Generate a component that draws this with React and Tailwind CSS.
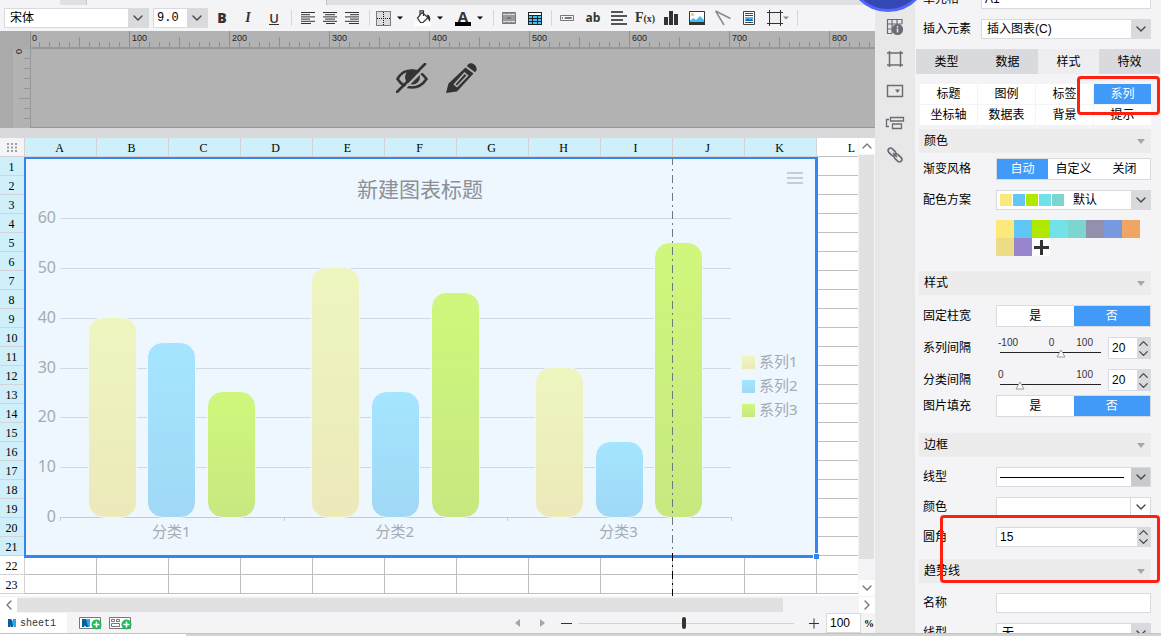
import { ChevronDown, ChevronLeft, ChevronRight, ChevronUp } from "lucide-react";

const COLUMNS = ["A", "B", "C", "D", "E", "F", "G", "H", "I", "J", "K", "L"];
const ROWS = Array.from({ length: 23 }, (_, i) => i + 1);
const SELECTED_ROWS = 21;
const SELECTED_COLUMNS = 11;

const CATEGORIES = [
  { name: "分类1", values: [40, 35, 25] },
  { name: "分类2", values: [50, 25, 45] },
  { name: "分类3", values: [30, 15, 55] },
];
const SERIES = [
  { name: "系列1", fill: "url(#series-yellow)" },
  { name: "系列2", fill: "url(#series-blue)" },
  { name: "系列3", fill: "url(#series-green)" },
];

const PALETTE = [
  "bg-[#fbe97b]",
  "bg-[#60c6f6]",
  "bg-[#b0e800]",
  "bg-[#71e2e8]",
  "bg-[#7cd5cf]",
  "bg-[#9191ad]",
  "bg-[#7898e0]",
  "bg-[#f1a565]",
  "bg-[#ecdc86]",
  "bg-[#9885cc]",
];

/* ---------- toolbar ---------- */

function Divider({ className }) {
  return <span className={`h-4 w-px shrink-0 bg-[#d6d6da] ${className}`} />;
}

function ToolButton({ label, className = "w-[26px]", children }) {
  return (
    <button aria-label={label} className={`flex h-5 shrink-0 items-center justify-center text-[#333] ${className}`}>
      {children}
    </button>
  );
}

function Caret({ className = "text-black" }) {
  return (
    <svg className={`w-1.5 h-1 shrink-0 ${className}`} viewBox="0 0 6 4">
      <path d="M0 .5h6L3 3.5z" fill="currentColor" />
    </svg>
  );
}

function AlignIcon({ lines }) {
  return (
    <svg width="14" height="12" viewBox="0 0 14 12" stroke="#333" strokeWidth="1">
      {lines.map(([x1, x2], i) => (
        <path key={i} d={`M${x1} ${i * 2.2 + 0.5}H${x2}`} />
      ))}
    </svg>
  );
}

function Toolbar() {
  return (
    <div className="flex h-[26px] items-center bg-[#f4f4f7] pl-1">
      <div className="flex h-5 w-[145px] shrink-0 border border-[#d9dade] bg-white">
        <select aria-label="字体" className="min-w-0 flex-1 appearance-none pl-[5px] text-xs leading-[18px]">
          <option>宋体</option>
        </select>
        <span className="flex w-5 items-center justify-center bg-[#d9dade]">
          <ChevronDown size={16} strokeWidth={2} color="#444" />
        </span>
      </div>
      <div className="ml-1 flex h-5 w-[55px] shrink-0 border border-[#d9dade] bg-white">
        <select
          aria-label="字号"
          className="min-w-0 flex-1 appearance-none pl-[3px] font-['Liberation_Mono',monospace] text-xs leading-[18px]"
        >
          <option>9.0</option>
        </select>
        <span className="flex w-5 items-center justify-center bg-[#d9dade]">
          <ChevronDown size={16} strokeWidth={2} color="#444" />
        </span>
      </div>

      <ToolButton label="加粗" className="ml-px w-[26px]">
        <span className="font-['Open_Sans',sans-serif] text-sm font-extrabold">B</span>
      </ToolButton>
      <ToolButton label="斜体">
        <span className="font-['Liberation_Serif',serif] text-sm font-bold italic">I</span>
      </ToolButton>
      <ToolButton label="下划线">
        <span className="border-b border-[#333] font-['Open_Sans',sans-serif] text-[13px] leading-3 font-semibold">U</span>
      </ToolButton>
      <Divider className="mr-[5px] ml-1" />
      <ToolButton label="左对齐" className="w-[22px]">
        <AlignIcon lines={[[0, 14], [0, 9], [0, 14], [0, 9], [0, 14], [0, 10]]} />
      </ToolButton>
      <ToolButton label="居中" className="w-[22px]">
        <AlignIcon lines={[[0, 14], [2, 12], [0, 14], [2, 12], [0, 14], [3, 12]]} />
      </ToolButton>
      <ToolButton label="右对齐" className="w-[22px]">
        <AlignIcon lines={[[0, 14], [5, 14], [0, 14], [5, 14], [0, 14], [4, 14]]} />
      </ToolButton>
      <Divider className="mr-[5px] ml-1.5" />

      <div className="flex gap-3">
        <ToolButton label="边框" className="gap-1.5">
          <svg width="16" height="16" viewBox="0 0 16 16">
            <path d="M1.5 1.5h14v14h-14z" fill="#dcdce0" />
            <path d="M1.5 1.5h14v14h-14zM8.5 2v13M2 8.5h13" fill="none" stroke="#111" strokeDasharray="1 1" />
          </svg>
          <Caret />
        </ToolButton>
        <ToolButton label="填充颜色" className="gap-1.5">
          <svg width="16" height="16" viewBox="0 0 16 16">
            <path d="M0 12h16v4H0z" fill="#fff" />
            <path d="M7 2.5 13 7.5 8 12.5H5.5L2.5 8z" fill="#fff" stroke="#333" strokeWidth="1.2" />
            <path d="M5 5V.8h3.5V6" fill="none" stroke="#333" strokeWidth="1.2" />
            <path d="M12 4.5c3 .5 3.700 3 3 7-1 0-1.500-2-2.500-3.500z" fill="#333" />
          </svg>
          <Caret />
        </ToolButton>
        <ToolButton label="文字颜色" className="gap-1.5">
          <span className="flex w-4 flex-col items-center border-b-4 border-black font-['Open_Sans',sans-serif] text-[15px] leading-3 font-bold">
            A
          </span>
          <Caret />
        </ToolButton>
      </div>
      <Divider className="mr-0.5 ml-2.5" />

      <ToolButton label="合并单元格">
        <svg width="14" height="12" viewBox="0 0 14 12">
          <path d="M.5.5h13v11H.5z" fill="#9a9a9a" stroke="#777" />
          <path d="M1 2.500h12M1 9.500h12" stroke="#d8d8d8" />
          <path d="M4.500 0v2M9.500 0v2M4.500 10v2M9.500 10v2" stroke="#777" />
          <path d="M5 6h4" stroke="#777" strokeWidth="2" />
        </svg>
      </ToolButton>
      <ToolButton label="插入表格">
        <svg width="14" height="13" viewBox="0 0 14 13">
          <path d="M0 0h14v13H0z" fill="#222" />
          <path d="M1 1h12v2H1z" fill="#fff" />
          <path
            d="M1 4h3v2H1zM5 4h4v2H5zM10 4h3v2h-3zM1 7h3v2H1zM5 7h4v2H5zM10 7h3v2h-3zM1 10h3v2H1zM5 10h4v2H5zM10 10h3v2h-3z"
            fill="#43c3f7"
          />
        </svg>
      </ToolButton>
      <Divider className="mr-0.5 ml-[3px]" />
      <ToolButton label="文本控件">
        <svg width="14" height="6" viewBox="0 0 14 6" fill="none" stroke="#777">
          <path d="M.5.5h13v5H.5zM2.500 2v2M5 2.500h6.500v1H5z" />
        </svg>
      </ToolButton>
      <ToolButton label="普通文本">
        <span className="font-['Open_Sans',sans-serif] text-xs font-bold">ab</span>
      </ToolButton>
      <ToolButton label="富文本">
        <svg width="16" height="14" viewBox="0 0 16 14" stroke="#555" strokeWidth="2">
          <path d="M0 1h12M0 5h16M0 9h12M0 13h16" />
        </svg>
      </ToolButton>
      <ToolButton label="公式">
        <span className="font-['Liberation_Serif',serif] text-sm font-bold">F</span>
        <span className="font-['Liberation_Serif',serif] text-[10px] font-bold">(x)</span>
      </ToolButton>
      <ToolButton label="图表">
        <svg width="14" height="14" viewBox="0 0 14 14" fill="#333">
          <path d="M0 6h4v8H0zM5 0h4v14H5zM10 3h4v11h-4z" />
        </svg>
      </ToolButton>
      <ToolButton label="图片">
        <svg width="16" height="14" viewBox="0 0 16 14">
          <path d="M.5.5h15v13H.5z" fill="#fff" stroke="#333" />
          <circle cx="3.500" cy="3.500" r="1.600" fill="#f8c050" />
          <path d="M1 11V9.500L4.500 7 7 9l4-4 4 4v2z" fill="#43bdf5" />
          <path d="M0 11h16v3H0z" fill="#333" />
        </svg>
      </ToolButton>
      <ToolButton label="斜线">
        <svg width="16" height="16" viewBox="0 0 16 16" fill="none" stroke="#8a8a8a" strokeWidth="1.5">
          <path d="M.5 1 15.500 8.500M.5 1 9 15" />
        </svg>
      </ToolButton>
      <ToolButton label="子报表">
        <svg width="12" height="14" viewBox="0 0 12 14">
          <path d="M.5.5h11v13H.5z" fill="#fff" stroke="#444" />
          <path d="M2 2.500h8M2 4.500h8M2 11.500h8" stroke="#444" />
          <path d="M2 6h8v4H2z" fill="#43bdf5" />
          <path d="M2 10 5 7.500 7 9l1.500-1.200L10 10z" fill="#1663b0" />
        </svg>
      </ToolButton>
      <ToolButton label="悬浮元素" className="w-7 pl-1">
        <svg width="16" height="16" viewBox="0 0 16 16" stroke="#333" className="shrink-0">
          <path d="M2.500 2.500h11v11h-11z" fill="#efefef" />
          <path d="M0 2.500h16M0 13.500h16M2.500 0v16M13.500 0v16" fill="none" />
        </svg>
        <Caret className="text-[#888]" />
      </ToolButton>
      <Divider className="ml-[7px]" />
    </div>
  );
}

/* ---------- ruler and parameter pane ---------- */

function ParameterPane() {
  const ticks = Array.from({ length: 85 }, (_, i) => i);
  return (
    <div className="grid h-[97px] grid-cols-[30px_minmax(0,1fr)] grid-rows-[18px_minmax(0,1fr)] bg-[#b2b2b2]">
      <div className="bg-[#aaa]" />
      <svg className="h-full w-full" fontFamily="'Liberation Sans',sans-serif" fontSize="9">
        {ticks.map((i) => (
          <path
            key={i}
            d={`M${i * 10 - 0.5 + (i === 0 ? 1 : 0)} ${i % 10 === 0 ? 0 : i % 5 === 0 ? 6 : 11}V17`}
            stroke="#8f8f8f"
          />
        ))}
        {ticks
          .filter((i) => i % 10 === 0)
          .map((i) => (
            <text key={i} x={i * 10 + 2} y="10" fill="#222">
              {i * 10}
            </text>
          ))}
        <path d="M0 17h2000" stroke="#979797" strokeWidth="2" />
      </svg>
      <div className="flex justify-end bg-[#aaa]">
        <svg className="h-full w-[17px] bg-[#b2b2b2]" fontFamily="'Liberation Sans',sans-serif" fontSize="9">
          <text x="-5" y="9" transform="rotate(-90)" fill="#222">
            0
          </text>
          {[1, 2, 3, 4, 5, 6, 7].map((i) => (
            <path key={i} d={`M${i === 5 ? 6 : 11} ${i * 10 - 0.5}H17`} stroke="#979797" />
          ))}
        </svg>
      </div>
      <div className="flex justify-center gap-[18px] border-b border-l border-[#979797] pt-3.5 pr-8">
        <button aria-label="隐藏" className="h-[30px] w-8">
          <svg width="32" height="30" viewBox="0 0 32 30">
            <path d="M1.500 16C6 8.500 10.500 7.500 16 7.500s10.500 2.500 14.500 8.500c-4 6-9 8.500-14.500 8.500S5.500 22 1.500 16z" fill="none" stroke="#333" strokeWidth="2.600" />
            <circle cx="16.500" cy="14" r="7.500" fill="#333" />
            <path d="M8 11c-1 3.500-.5 7 1.500 9.500" fill="none" stroke="#b2b2b2" strokeWidth="1.500" />
            <path d="M18 10.500c2 .5 3 2 3 4" fill="none" stroke="#b2b2b2" strokeWidth="1.500" />
            <path d="M4 30 32 2" stroke="#b2b2b2" strokeWidth="2.500" />
            <path d="M1 29 29 1" stroke="#333" strokeWidth="2.600" strokeLinecap="round" />
          </svg>
        </button>
        <button aria-label="编辑" className="h-[30px] w-8">
          <svg width="32" height="30" viewBox="0 0 32 30">
            <path d="M21.500 2c3-4 10-.5 9 5.500L29 9.200 21 3.200z" fill="#333" />
            <path d="M19.500 4.500 27.500 10.500 11 28.500 0 30 2.500 20.500z" fill="#333" />
            <path d="M18.500 10 21.500 12.500 11 23.500l-2.500-2z" fill="none" stroke="#b2b2b2" strokeWidth="1.600" />
          </svg>
        </button>
      </div>
    </div>
  );
}

/* ---------- chart ---------- */

function Chart() {
  return (
    <svg
      width="789"
      height="396"
      viewBox="0 0 789 396"
      className="block"
      fontFamily="'Noto Sans','Noto Sans CJK SC',sans-serif"
      fontSize="15"
      fill="#a3abb3"
    >
      <defs>
        <linearGradient id="series-yellow" x1="0" y1="0" x2="0" y2="1">
          <stop offset="0" stopColor="#eef6c0" />
          <stop offset="1" stopColor="#ece9ba" />
        </linearGradient>
        <linearGradient id="series-blue" x1="0" y1="0" x2="0" y2="1">
          <stop offset="0" stopColor="#a4e5ff" />
          <stop offset="1" stopColor="#a0d8f6" />
        </linearGradient>
        <linearGradient id="series-green" x1="0" y1="0" x2="0" y2="1">
          <stop offset="0" stopColor="#d0f77c" />
          <stop offset="1" stopColor="#c7e880" />
        </linearGradient>
      </defs>

      <text x="394" y="38" fontSize="21" textAnchor="middle" fill="#8b9097">
        新建图表标题
      </text>
      <path d="M761 14h16M761 19h16M761 24h16" stroke="#c5ccd3" strokeWidth="2" />

      {[0, 10, 20, 30, 40, 50, 60].map((v) => {
        const y = Math.round(358 - v * 4.983) + 0.5;
        return (
          <g key={v}>
            <path d={`M34 ${y}H705`} stroke={v === 0 ? "#c3ccd6" : "#d0d8e0"} />
            <text x="30" y={y + 4.500} fontSize="16" textAnchor="end">
              {v}
            </text>
          </g>
        );
      })}
      <path d="M34.500 358v4M258.500 358v4M481.500 358v4M705.500 358v4" stroke="#c3ccd6" />

      {CATEGORIES.map((category, c) => {
        const left = 62.8 + c * 223.6;
        return (
          <g key={category.name}>
            {category.values.map((v, i) => {
              const h = Math.round(v * 4.983);
              return (
                <rect
                  key={i}
                  x={Math.round(left + i * 59.6) - 0.5}
                  y={357.5 - h}
                  width="48"
                  height={h + 1}
                  rx="15"
                  fill={SERIES[i].fill}
                  stroke="#eef6fe"
                />
              );
            })}
            <text x={left + 82.500} y="378" textAnchor="middle">
              {category.name}
            </text>
          </g>
        );
      })}

      {SERIES.map((s, i) => (
        <g key={s.name}>
          <rect x="716" y={197 + i * 24} width="13" height="13" fill={s.fill} />
          <text x="733" y={208 + i * 24}>
            {s.name}
          </text>
        </g>
      ))}
    </svg>
  );
}

/* ---------- sheet ---------- */

function Sheet() {
  return (
    <div className="relative min-w-0 flex-1 overflow-hidden bg-white">
      <table className="w-[889px] table-fixed border-separate border-spacing-0 text-center font-['Liberation_Serif',serif] text-xs">
        <thead>
          <tr className="h-[19px]">
            <th className="w-[25px] border-r border-b border-[#d3d3d8] bg-[#f4f4f7] p-0" aria-label="全选">
              <svg className="mx-auto" width="11" height="9" viewBox="0 0 11 9" fill="#a0a0a0">
                <path d="M0 0h2v2H0zM4 0h2v2H4zM8 0h2v2H8zM0 3.500h2v2H0zM4 3.500h2v2H4zM8 3.500h2v2H8zM0 7h2v2H0zM4 7h2v2H4zM8 7h2v2H8z" />
              </svg>
            </th>
            {COLUMNS.map((c, i) => (
              <th
                key={c}
                className={`w-[72px] border-r border-b p-0 pt-[3px] pr-0.5 leading-[15px] font-normal ${
                  i < SELECTED_COLUMNS ? "border-[#d3d3d8] bg-[#cff0fb]" : "border-[#bfbfbf] bg-white"
                }`}
              >
                {c}
              </th>
            ))}
          </tr>
        </thead>
        <tbody>
          {ROWS.map((r) => (
            <tr key={r} className="h-[19px]">
              <th
                className={`border-r border-b border-[#d3d3d8] p-0 pt-0.5 pr-px leading-4 font-normal ${
                  r <= SELECTED_ROWS ? "bg-[#cff0fb]" : "bg-white"
                }`}
              >
                {r}
              </th>
              {COLUMNS.map((c) => (
                <td key={c} className="border-r border-b border-[#bfbfbf] p-0" />
              ))}
            </tr>
          ))}
        </tbody>
      </table>

      <div className="absolute top-[19px] left-6 border-t-2 border-r-[3px] border-b-[3px] border-l-2 border-[#3585ef] bg-[#eef6fe]">
        <Chart />
        <span className="absolute -right-1 -bottom-1 size-[6px] border-t border-l border-white bg-[#3585ef]" />
      </div>
      <svg className="absolute top-[19px] left-[672px] h-full w-px" strokeDasharray="8 4 2 4">
        <path d="M.5 0V396" stroke="#6d7883" />
        <path d="M.5 396V1200" stroke="#000" />
      </svg>
    </div>
  );
}

function SheetArea() {
  return (
    <div className="flex min-h-0 flex-1 flex-col">
      <div className="flex min-h-0 flex-1">
        <Sheet />
        <div className="flex w-[17px] flex-col bg-[#f4f4f7] pl-px">
          <button aria-label="向上" className="flex h-4 items-center justify-center bg-white">
            <ChevronUp size={16} strokeWidth={2} color="#777" />
          </button>
          <div className="mt-px flex-1">
            <div className="h-[95%] w-[15px] bg-[#e1e1e1]" />
          </div>
          <button aria-label="向下" className="flex h-4 items-center justify-center bg-white">
            <ChevronDown size={16} strokeWidth={2} color="#777" />
          </button>
        </div>
      </div>
      <div className="mt-px flex h-4 bg-[#f4f4f7]">
        <button aria-label="向左" className="flex w-[17px] items-center justify-center bg-white">
          <ChevronLeft size={16} strokeWidth={2} color="#777" />
        </button>
        <div className="flex-1 py-px">
          <div className="h-full w-[91%] bg-[#e1e1e1]" />
        </div>
        <button aria-label="向右" className="flex w-4 items-center justify-center bg-white">
          <ChevronRight size={16} strokeWidth={2} color="#777" />
        </button>
      </div>
    </div>
  );
}

function SheetBadge({ children, label }) {
  return (
    <button aria-label={label}>
      <svg width="24" height="14" viewBox="0 0 24 14">
        <path d="M.5 1.500h21v11H.5z" fill="#fff" stroke="#777" />
        {children}
        <circle cx="17.500" cy="8.500" r="5" fill="#1bbf54" />
        <path d="M14.500 8.500h6M17.500 5.500v6" stroke="#fff" strokeWidth="1.500" />
      </svg>
    </button>
  );
}

function StatusBar() {
  return (
    <div className="flex h-5 items-center bg-[#f4f4f7]">
      <button className="flex h-full w-[67px] items-center gap-1 bg-white pl-2 font-['Liberation_Mono',monospace] text-[10px] text-[#333]">
        <svg width="8" height="8" viewBox="0 0 8 8">
          <path d="M0 0h3l2 3v5H3L2.500 5v3H0z" fill="#0b5aa5" />
          <path d="M5 0h3v8H6L4 4z" fill="#2ea7e0" />
        </svg>
        sheet1
      </button>
      <div className="ml-3 flex gap-1.5">
        <SheetBadge label="新建工作表">
          <path d="M3 3h4l3 4v4H7L5.500 9v2H3z" fill="#0b5aa5" />
          <path d="M7 3h4v8H9z" fill="#2ea7e0" />
        </SheetBadge>
        <SheetBadge label="新建聚合块">
          <path d="M2.500 3.500h3v2h-3zM7.500 3.500h3v2h-3zM2.500 7.500h8v3h-8z" fill="none" stroke="#777" />
        </SheetBadge>
      </div>
      <div className="ml-auto flex h-full items-center">
        <button aria-label="上一个">
          <svg width="5" height="8" viewBox="0 0 5 8">
            <path d="M5 0v8L0 4z" fill="#a5a5a5" />
          </svg>
        </button>
        <button aria-label="下一个" className="ml-5">
          <svg width="5" height="8" viewBox="0 0 5 8">
            <path d="M0 0v8l5-4z" fill="#a5a5a5" />
          </svg>
        </button>
        <button aria-label="缩小" className="ml-4">
          <svg width="12" height="12" viewBox="0 0 12 12">
            <path d="M0 6.500h11" stroke="#333" />
          </svg>
        </button>
        <input
          type="range"
          aria-label="缩放"
          defaultValue="49"
          className="mx-1.5 h-px w-[215px] appearance-none bg-[#d3d3d6] [&::-webkit-slider-thumb]:h-3 [&::-webkit-slider-thumb]:w-1 [&::-webkit-slider-thumb]:appearance-none [&::-webkit-slider-thumb]:rounded-xs [&::-webkit-slider-thumb]:bg-[#333]"
        />
        <button aria-label="放大" className="ml-2">
          <svg width="12" height="12" viewBox="0 0 12 12">
            <path d="M1 6.500h10M6 1.500v10" stroke="#333" />
          </svg>
        </button>
        <input
          id="zoom"
          defaultValue="100"
          className="ml-1.5 h-full w-[35px] border border-[#d9dade] bg-white pl-[3px] text-xs"
        />
        <label htmlFor="zoom" className="w-[14px] pl-[3px] font-['Liberation_Serif',serif] text-[10px] font-bold">
          %
        </label>
      </div>
    </div>
  );
}

/* ---------- icon strip ---------- */

function IconStrip() {
  return (
    <div className="flex w-10 shrink-0 flex-col items-center gap-3.5 bg-[#e8e8e8] pt-[18px]">
      <button aria-label="单元格属性">
        <svg width="18" height="18" viewBox="0 0 18 18" fill="none" stroke="#6b6b76" strokeWidth="1.200">
          <path d="M6 15.500H1.500V1.500H16V6M1.500 6H16M6 1.500V15.500M11 1.500V6M1.500 11H6" />
          <circle cx="11.500" cy="11.500" r="5" fill="#6b6b76" />
          <path d="M11.500 10.500v4M11.500 8v1.500" stroke="#e8e8e8" strokeWidth="1.500" />
        </svg>
      </button>
      <button aria-label="悬浮元素">
        <svg width="18" height="18" viewBox="0 0 18 18" fill="none" stroke="#6b6b76" strokeWidth="1.500">
          <path d="M1 3h16M1 15h16M3.500 1v16M14.500 1v16" />
        </svg>
      </button>
      <button aria-label="控件设置">
        <svg width="18" height="18" viewBox="0 0 18 18">
          <path d="M1.500 3.500h15v11h-15z" fill="none" stroke="#6b6b76" strokeWidth="1.400" />
          <path d="M9 7.500h5l-2.500 3.500z" fill="#6b6b76" />
        </svg>
      </button>
      <button aria-label="条件属性">
        <svg width="20" height="18" viewBox="0 0 20 18" fill="none" stroke="#6b6b76" strokeWidth="1.300">
          <path d="M5.500 3.500h13v3.500h-13zM7.500 10h9v4.500h-9zM4 5.500H1.500v7H4" />
        </svg>
      </button>
      <button aria-label="超级链接">
        <svg width="18" height="18" viewBox="0 0 18 18" fill="none" stroke="#6b6b76" strokeWidth="1.700">
          <rect x="-4.500" y="-2.500" width="9" height="5" rx="2.500" transform="translate(6 6) rotate(45)" />
          <rect x="-4.500" y="-2.500" width="9" height="5" rx="2.500" transform="translate(12 12) rotate(45)" />
          <path d="m7 7 4 4" />
        </svg>
      </button>
    </div>
  );
}

/* ---------- property panel ---------- */

function SectionHeader({ className, children }) {
  return (
    <h3 className={`flex h-6 items-center justify-between bg-[#ececec] pr-1.5 pl-[5px] ${className}`}>
      {children}
      <svg width="8" height="5" viewBox="0 0 8 5">
        <path d="M0 0h8L4 5z" fill="#a8a8a8" />
      </svg>
    </h3>
  );
}

function Field({ label, htmlFor, className = "mt-2.5", wide, children }) {
  return (
    <div className={`flex items-center ${className}`}>
      <label htmlFor={htmlFor} className={`shrink-0 pl-1 ${wide ? "w-[62px]" : "w-[77px]"}`}>
        {label}
      </label>
      {children}
    </div>
  );
}

function SelectBox({ id, value, arrow = "bg-[#d9dade]", children }) {
  return (
    <div className="flex h-5 min-w-0 flex-1 items-center border border-[#d9dade] bg-white">
      {children}
      <select id={id} className="h-full min-w-0 flex-1 appearance-none pl-[5px] text-xs">
        <option>{value}</option>
      </select>
      <span className={`flex h-full w-[19px] items-center justify-center ${arrow}`}>
        <ChevronDown size={16} strokeWidth={2} color="#444" />
      </span>
    </div>
  );
}

function Segmented({ id, options, selected }) {
  return (
    <div id={id} role="group" className="flex h-[22px] flex-1 border border-[#d9dade] bg-white">
      {options.map((o) => (
        <button
          key={o}
          aria-pressed={o === selected}
          className={`flex-1 ${o === selected ? "bg-[#4199f8] text-white" : ""}`}
        >
          {o}
        </button>
      ))}
    </div>
  );
}

function Spinner({ id, value, className = "h-[22px] w-[43px]" }) {
  return (
    <div className={`flex border border-[#d9dade] bg-white ${className}`}>
      <input id={id} defaultValue={value} className="w-0 min-w-0 flex-1 pl-[3px] text-xs" />
      <div className="flex w-[13px] shrink-0 flex-col items-center bg-[#d9dade]">
        <button aria-label="增加" className="flex h-1/2 items-center">
          <ChevronUp size={15} strokeWidth={2} color="#444" />
        </button>
        <button aria-label="减少" className="flex h-1/2 items-center">
          <ChevronDown size={15} strokeWidth={2} color="#444" />
        </button>
      </div>
    </div>
  );
}

function GapSlider({ label, min, max, value, marks }) {
  const position = ((value - min) / (max - min)) * 100;
  return (
    <div className="flex h-[22px] flex-1">
      <div className="flex min-w-0 flex-1 flex-col pr-[7px] pl-1">
        <div className="-ml-0.5 grid grid-cols-3 pr-2 text-[10px] leading-3 text-[#333]">
          <span>{marks[0]}</span>
          <span className="pl-3 text-center">{marks[1]}</span>
          <span className="text-right">{marks[2]}</span>
        </div>
        <div className="relative mt-[3px]">
          <input
            type="range"
            aria-label={label}
            min={min}
            max={max}
            defaultValue={value}
            className="block h-px w-full appearance-none bg-[#222] [&::-webkit-slider-thumb]:size-2 [&::-webkit-slider-thumb]:appearance-none [&::-webkit-slider-thumb]:bg-transparent"
          />
          <svg
            className="pointer-events-none absolute -top-[3px] -ml-[5px]"
            style={{ left: `${position}%` }}
            width="10"
            height="9"
            viewBox="0 0 10 9"
          >
            <path d="M5 1 9 8H1z" fill="#fff" stroke="#999" />
          </svg>
        </div>
      </div>
      <Spinner id={label} value={value} />
    </div>
  );
}

function PropertyPanel() {
  return (
    <aside className="relative w-[246px] shrink-0 overflow-hidden bg-[#f4f4f7] pr-2.5 pl-1 text-xs leading-4 text-black">
      <Field label="单元格" htmlFor="cell" className="-mt-[11px]" wide>
        <input id="cell" defaultValue="A1" className="h-5 min-w-0 flex-1 border border-[#d9dade] bg-white pl-[3px] text-xs" />
      </Field>
      <Field label="插入元素" htmlFor="element" wide>
        <SelectBox id="element" value="插入图表(C)" />
      </Field>

      <div className="mt-2.5 -mr-[9px] -ml-[3px] grid h-[25px] grid-cols-4">
        {["类型", "数据", "样式", "特效"].map((tab) => (
          <button key={tab} className={tab === "样式" ? "bg-[#eeeef0]" : "bg-[#d9dade]"}>
            {tab}
          </button>
        ))}
      </div>

      <div className="mt-2.5 ml-px grid grid-cols-4 gap-px">
        {["标题", "图例", "标签", "系列", "坐标轴", "数据表", "背景", "提示"].map((item) => (
          <button key={item} className={`h-5 ${item === "系列" ? "bg-[#4199f8] text-white" : "bg-white"}`}>
            {item}
          </button>
        ))}
      </div>

      <SectionHeader className="mt-1">颜色</SectionHeader>
      <Field label="渐变风格" className="mt-[5px]">
        <Segmented options={["自动", "自定义", "关闭"]} selected="自动" />
      </Field>
      <Field label="配色方案" htmlFor="scheme">
        <SelectBox id="scheme" value="默认">
          <span className="flex gap-px pr-1 pl-[3px]">
            {PALETTE.slice(0, 5).map((c) => (
              <span key={c} className={`size-3 ${c}`} />
            ))}
          </span>
        </SelectBox>
      </Field>
      <div className="mt-2.5 ml-[77px] grid w-36 grid-cols-8">
        {PALETTE.map((c) => (
          <button key={c} aria-label="颜色" className={`size-[18px] ${c}`} />
        ))}
        <button aria-label="添加颜色" className="size-[18px] bg-white">
          <svg width="18" height="18" viewBox="0 0 18 18">
            <path d="M2 9.500h15M9.500 2v15" stroke="#333" strokeWidth="3" />
          </svg>
        </button>
      </div>

      <SectionHeader className="mt-[15px]">样式</SectionHeader>
      <Field label="固定柱宽">
        <Segmented options={["是", "否"]} selected="否" />
      </Field>
      <Field label="系列间隔" htmlFor="系列间隔">
        <GapSlider label="系列间隔" min={-100} max={100} value={20} marks={["-100", "0", "100"]} />
      </Field>
      <Field label="分类间隔" htmlFor="分类间隔">
        <GapSlider label="分类间隔" min={0} max={100} value={20} marks={["0", "", "100"]} />
      </Field>
      <Field label="图片填充" className="mt-1">
        <Segmented options={["是", "否"]} selected="否" />
      </Field>

      <SectionHeader className="mt-4">边框</SectionHeader>
      <Field label="线型">
        <button aria-label="线型" className="flex h-5 flex-1 items-center border border-[#d9dade] bg-white pl-[3px]">
          <span className="mr-[7px] h-px flex-1 bg-black" />
          <span className="flex h-full w-[19px] items-center justify-center bg-[#c9cace]">
            <ChevronDown size={16} strokeWidth={2} color="#444" />
          </span>
        </button>
      </Field>
      <Field label="颜色">
        <button aria-label="边框颜色" className="flex h-5 flex-1 justify-end border border-[#d9dade] bg-white">
          <span className="flex h-full w-5 items-center justify-center border-l border-[#d9dade]">
            <ChevronDown size={16} strokeWidth={2} color="#444" />
          </span>
        </button>
      </Field>
      <Field label="圆角" htmlFor="radius">
        <Spinner id="radius" value={15} className="h-5 min-w-0 flex-1" />
      </Field>

      <SectionHeader className="mt-3">趋势线</SectionHeader>
      <Field label="名称" htmlFor="trend-name">
        <input id="trend-name" className="h-5 min-w-0 flex-1 border border-[#d9dade] bg-white" />
      </Field>
      <Field label="线型" htmlFor="trend-line">
        <SelectBox id="trend-line" value="无" />
      </Field>

      {/* highlight marks */}
      <div className="pointer-events-none absolute top-[76px] right-[1px] h-[39px] w-[83px] rounded-sm border-3 border-[#ff2010]" />
      <div className="pointer-events-none absolute top-[515px] right-[1px] h-[68px] w-[220px] rounded-sm border-3 border-[#ff2010]" />
    </aside>
  );
}

export default function App() {
  return (
    <div className="relative flex h-screen flex-col overflow-hidden bg-[#f4f4f7] font-['Liberation_Sans','Noto_Sans_CJK_SC',sans-serif]">
      <div className="flex min-h-0 flex-1">
        <main className="flex min-w-0 flex-1 flex-col">
          <div className="flex h-[5px] shrink-0">
            <span className="ml-[60px] w-[27px] border-r border-[#c4c4c8] bg-[#e0e0e2]" />
            <span className="ml-[239px] flex-1 border-l border-[#c4c4c8] bg-[#e0e0e2]" />
          </div>
          <Toolbar />
          <ParameterPane />
          <div className="h-2.5 shrink-0 bg-[#d9d9db]" />
          <SheetArea />
          <StatusBar />
        </main>
        <IconStrip />
        <PropertyPanel />
      </div>
      <div className="flex h-[3px] shrink-0 border-t border-[#c4c4c4] bg-[#d4d4d4]">
        <span className="w-[186px] bg-white" />
      </div>
      <span className="absolute -top-[70px] right-[232px] size-[82px] rounded-full border-3 border-[#5166ff] bg-[#3348b5]" />
    </div>
  );
}
